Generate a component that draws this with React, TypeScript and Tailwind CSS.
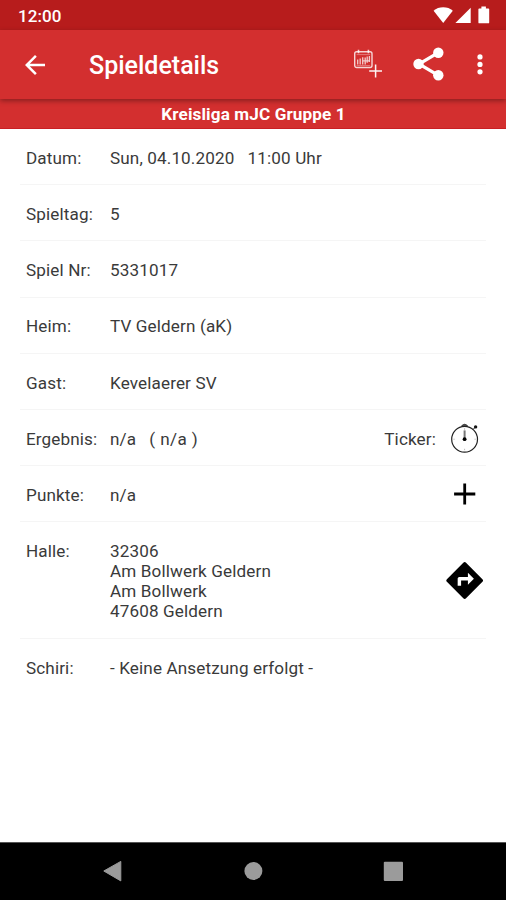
import type { ReactNode } from "react";

function StatusBar() {
  return (
    <div className="flex h-[30px] items-center justify-between bg-[#b71c1c] pl-[18px] pr-[16px] text-white">
      <span className="pt-[2px] text-[17px] leading-[20px] font-medium tracking-[0.1px]">12:00</span>
      <svg width="57" height="30" viewBox="0 0 57 30" fill="currentColor">
        <path d="M10.2 23 L0.6 10.8 C5.6 6.2 14.8 6.2 19.8 10.8 Z" />
        <path d="M37.7 7.8 V23 H22.4 Z" />
        <path d="M48.4 6.6 H52.9 V8.4 H55.4 Q56.2 8.4 56.2 9.2 V22.4 Q56.2 23.3 55.4 23.3 H46.2 Q45.4 23.3 45.4 22.4 V9.2 Q45.4 8.4 46.2 8.4 H48.4 Z" />
      </svg>
    </div>
  );
}

function CalendarAddIcon() {
  return (
    <svg width="30" height="30" viewBox="0 0 30 30" fill="none" stroke="#fff" strokeOpacity="0.8">
      <rect x="1.7" y="2.7" width="17.3" height="15.8" rx="2" strokeWidth="1.4" />
      <path d="M5.5 0.8v3.4M15.4 0.8v3.4" strokeWidth="1.6" />
      <path d="M3.6 5.6h13.6M3.6 16.6h13.6" strokeWidth="0.9" strokeOpacity="0.4" />
      <path
        d="M4.7 10.6v5M7.2 9.4v6.2M9.7 8.2v7.4M12.2 8.6v7M14.2 7.4v6.4M16.4 7v6M10 11.8h6.6"
        strokeWidth="1.3"
        strokeOpacity="0.75"
      />
      <path d="M22.6 15.6v12.8M16.2 22h12.8" strokeWidth="1.5" strokeOpacity="0.95" />
    </svg>
  );
}

function AppBar() {
  return (
    <header className="relative z-10 flex h-[68.5px] items-center bg-[#d32f2f] text-white shadow-[0_2px_5px_rgba(0,0,0,0.35)]">
      <svg className="mt-px ml-[20px]" width="30" height="30" viewBox="0 0 24 24" fill="currentColor">
        <path d="M20 11H7.83l5.59-5.59L12 4l-8 8 8 8 1.41-1.41L7.83 13H20v-2z" />
      </svg>
      <h1 className="ml-[39px] flex-1 pt-[3px] text-[25px] leading-[30px] font-medium">Spieldetails</h1>
      <CalendarAddIcon />
      <svg className="ml-[29px]" width="34" height="36" viewBox="0 0 34 36" fill="currentColor">
        <path d="M26.3 6.7 L7 18 L26.3 29.3" fill="none" stroke="currentColor" strokeWidth="3.2" />
        <circle cx="26.3" cy="6.7" r="5.2" />
        <circle cx="6.5" cy="18" r="5.2" />
        <circle cx="26.3" cy="29.3" r="5.2" />
      </svg>
      <svg className="mr-[21.3px] ml-[29px]" width="10" height="30" viewBox="0 0 10 30" fill="currentColor">
        <circle cx="5" cy="7.9" r="2.6" />
        <circle cx="5" cy="15.4" r="2.6" />
        <circle cx="5" cy="22.8" r="2.6" />
      </svg>
    </header>
  );
}

function Row({ label, children, icon, tall }: { label: string; children: ReactNode; icon?: ReactNode; tall?: boolean }) {
  return (
    <div
      className={
        tall
          ? "flex h-[117px] border-b border-[#f5f5f5] pt-[18.85px] pl-[6px]"
          : "flex h-[56.2px] border-b border-[#f5f5f5] pt-[18.85px] pl-[6px] last:border-0"
      }
    >
      <dt className="w-[84px] shrink-0 whitespace-nowrap">{label}</dt>
      <dd className="flex-1 whitespace-pre">{children}</dd>
      {icon}
    </div>
  );
}

function StopwatchIcon() {
  return (
    <svg width="30" height="32" viewBox="0 0 30 32" fill="none" stroke="#222">
      <circle cx="14.6" cy="17.2" r="12.9" strokeWidth="1.2" />
      <path d="M11.6 3.6 Q14.6 0.8 17.6 3.6 Z" fill="#222" strokeWidth="0.6" />
      <path d="M14.6 8.4v8.4" stroke="#777" strokeWidth="2" />
      <circle cx="14.6" cy="17.2" r="1.9" fill="#000" stroke="none" />
      <path d="M14.6 6.2v1.6M3.4 17.2h1.3M24.5 17.2h1.3M14.6 26.8v1.4" stroke="#aaa" strokeWidth="0.8" />
      <path d="M23.3 7.2l2-2" strokeWidth="1" />
      <circle cx="25.6" cy="4.9" r="1.7" fill="#111" stroke="none" />
    </svg>
  );
}

function NavigationBar() {
  return (
    <nav className="h-[58.5px] border-t border-[#555] bg-black">
      <svg width="506" height="57" viewBox="0 0 506 57" fill="#9b9b9b">
        <path d="M103.8 28 L120.8 18.4 V37.9 Z" stroke="#9b9b9b" strokeWidth="1" strokeLinejoin="round" />
        <circle cx="253.4" cy="28" r="9" />
        <rect x="383.8" y="18.7" width="19.2" height="19.2" rx="1" />
      </svg>
    </nav>
  );
}

export default function App() {
  return (
    <div className="flex h-[900px] w-[506px] flex-col overflow-hidden bg-white font-[Roboto,'Liberation_Sans',sans-serif] text-[#3a3a3a]">
      <StatusBar />
      <AppBar />
      <div className="h-[30.5px] border-b border-[#c91f24] bg-[#d32f2f] pt-[5.5px] pl-px text-center text-[17.1px] leading-[20px] font-bold tracking-[0.13px] text-white">
        Kreisliga mJC Gruppe 1
      </div>
      <dl className="mx-[20px] flex-1 text-[17.1px] leading-[20.1px] tracking-[0.13px]">
        <Row label="Datum:">{"Sun, 04.10.2020   11:00 Uhr"}</Row>
        <Row label="Spieltag:">5</Row>
        <Row label="Spiel Nr:">5331017</Row>
        <Row label="Heim:">TV Geldern (aK)</Row>
        <Row label="Gast:">Kevelaerer SV</Row>
        <Row
          label="Ergebnis:"
          icon={
            <div className="flex">
              <span className="mr-[14px]">Ticker:</span>
              <div className="-mt-[6.5px] mr-[6px]">
                <StopwatchIcon />
              </div>
            </div>
          }
        >
          {"n/a   "}
          <span className="tracking-[0.4px]">( n/a )</span>
        </Row>
        <Row
          label="Punkte:"
          icon={
            <svg className="-mt-[2.5px] mr-[9px]" width="24" height="24" viewBox="0 0 24 24" stroke="#000" strokeWidth="2.8">
              <path d="M11.7 1.4v21.2M1.1 12h21.2" />
            </svg>
          }
        >
          n/a
        </Row>
        <Row
          tall
          label="Halle:"
          icon={
            <svg className="mt-[19px] mr-px" width="41" height="41" viewBox="0 0 24 24">
              <path d="M22.5 11.2l-9.6-9.6c-.5-.5-1.1-.5-1.6 0l-9.6 9.6c-.5.5-.5 1.1 0 1.6l9.6 9.6c.5.5 1.1.5 1.6 0l9.6-9.6c.5-.5.5-1.1 0-1.6zM14 14.5V12h-4v3H8v-4c0-.55.45-1 1-1h5V7.5l3.5 3.5-3.5 3.5z" />
            </svg>
          }
        >
          {"32306\nAm Bollwerk Geldern\nAm Bollwerk\n47608 Geldern"}
        </Row>
        <Row label="Schiri:">- Keine Ansetzung erfolgt -</Row>
      </dl>
      <NavigationBar />
    </div>
  );
}
